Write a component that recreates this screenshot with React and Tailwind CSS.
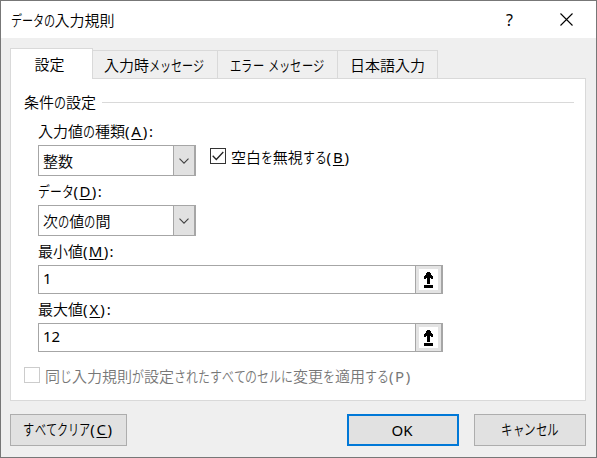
import React from "react";

// Splits a label into runs so that kana can be set narrower than kanji.
function Label({ text, size = 15, k = 0.75, gap = 1 }) {
  const runs = text.match(/[\u3040-\u30ff]|[\u4e00-\u9fff]+|[^\u3040-\u30ff\u4e00-\u9fff]+/g);
  return (
    <span className="inline-flex whitespace-pre">
      {runs.map((run, i) => {
        if (/[\u3040-\u30ff]/.test(run)) {
          return (
            <span key={i} className="inline-block font-[350]" style={{ width: size * k }}>
              <span className="inline-block origin-left" style={{ transform: `scaleX(${k})`, width: size }}>{run}</span>
            </span>
          );
        }
        const key = run.match(/^(\()([A-Z])(\).*)$/);
        if (key) {
          return (
            <span key={i} style={{ letterSpacing: gap }}>
              {key[1]}
              <span className={key[2] === "P" ? "" : "underline decoration-1 underline-offset-2"}>{key[2]}</span>
              {key[3]}
            </span>
          );
        }
        return <span key={i} className="font-[350]">{run}</span>;
      })}
    </span>
  );
}

function Select({ text, k }) {
  return (
    <div className="flex h-[31px] w-[158px] border border-[#a6a6a6] bg-white">
      <div className="flex-1 pl-[4px] leading-[30px]"><Label text={text} k={k} /></div>
      <div className="flex w-[22px] items-center justify-center border-l border-r border-[#a6a6a6] bg-[#e1e1e1]">
        <svg width="10" height="6" viewBox="0 0 10 6" fill="none" stroke="#404040" strokeWidth="1.1"><path d="M.5.7 5 5.2 9.5.7" /></svg>
      </div>
    </div>
  );
}

function RangeInput({ value }) {
  return (
    <div className="flex h-[29px] w-[405px] border border-[#a6a6a6] bg-white">
      <div className="flex-1 pl-[4px] leading-[25px]">{value}</div>
      <div className="w-[27px] border-l border-r border-[#a6a6a6] bg-[#e3e3e3] p-[3px]">
        <div className="flex h-[21px] w-[19px] items-center justify-center bg-white">
          <svg width="9" height="16" viewBox="0 0 9 16" fill="#000" shapeRendering="crispEdges">
            <path d="M3 0h3v1h1v2h1v1h1v3H7V6H6v6H3V6H2v1H0V4h1V3h1V1h1zM0 13h9v3H0z" />
          </svg>
        </div>
      </div>
    </div>
  );
}

export default function App() {
  return (
    <div className="flex h-[458px] w-[597px] flex-col border border-[#777] bg-[#efefef] font-['Noto_Sans','Noto_Sans_CJK_JP',sans-serif] text-[15px] leading-5 text-black">
      <header className="flex h-[37px] shrink-0 items-center bg-white pl-[10px]">
        <div className="flex-1"><Label text="データの入力規則" size={14.7} k={0.74} /></div>
        <span className="w-[54px] text-[16px]">?</span>
        <svg className="mr-[23px]" width="13" height="13" viewBox="0 0 13 13" stroke="#000" strokeWidth="1.1"><path d="m.5.5 12 12m0-12-12 12" /></svg>
      </header>

      <nav className="relative z-10 ml-[9px] mt-[10px] flex h-[31px] shrink-0 items-end leading-[28px]">
        <div className="flex h-[31px] w-[83px] justify-center border border-b-0 border-[#d9d9d9] bg-white pt-[1px] pr-[4px]"><Label text="設定" /></div>
        <div className="h-[29px] w-[125px] border-y border-r border-[#d9d9d9] pl-[11px]"><Label text="入力時メッセージ" k={0.74} /></div>
        <div className="h-[29px] w-[120px] border-y border-r border-[#d9d9d9] pl-[12px]"><Label text="エラー メッセージ" k={0.755} /></div>
        <div className="h-[29px] w-[100px] border-y border-r border-[#d9d9d9] pl-[12px]"><Label text="日本語入力" /></div>
      </nav>

      <main className="ml-[9px] -mt-px h-[323px] w-[576px] shrink-0 border border-[#d9d9d9] bg-white">
        <div className="ml-[13px] mt-[13px] flex h-5 items-center">
          <Label text="条件の設定" k={0.8} />
          <div className="ml-[6px] h-px w-[472px] bg-[#d9d9d9]" />
        </div>
        <div className="ml-[27px]">
          <div className="mt-[9px] h-5"><Label text="入力値の種類(A):" k={0.8} gap={1.8} /></div>
          <div className="mt-[4px] flex">
            <Select text="整数" />
            <div className="ml-[14px] mt-[3px] flex">
              <div className="flex h-4 w-4 items-center justify-center border border-[#333] bg-white">
                <svg width="12" height="10" viewBox="0 0 12 10" fill="none" stroke="#222" strokeWidth="1.3"><path d="m.7 4.7 3.6 3.8L11.3 1" /></svg>
              </div>
              <div className="ml-[5px] -mt-px"><Label text="空白を無視する(B)" k={0.79} gap={1.8} /></div>
            </div>
          </div>
          <div className="mt-[5px] h-5"><Label text="データ(D):" k={0.79} gap={1.4} /></div>
          <div className="mt-[4px]"><Select text="次の値の間" k={0.75} /></div>
          <div className="mt-[5px] h-5"><Label text="最小値(M):" gap={1.3} /></div>
          <div className="mt-[4px]"><RangeInput value="1" /></div>
          <div className="mt-[5px] h-5"><Label text="最大値(X):" gap={2} /></div>
          <div className="mt-[4px]"><RangeInput value="12" /></div>
        </div>
        <div className="ml-[13px] mt-[15px] flex text-[#777]">
          <div className="h-4 w-4 border border-[#ccc]" />
          <div className="ml-[5px] -mt-px"><Label text="同じ入力規則が設定されたすべてのセルに変更を適用する(P)" k={0.795} gap={1.6} /></div>
        </div>
      </main>

      <footer className="ml-[9px] mt-[13px] flex h-8 w-[576px] leading-[29px]">
        <button className="flex w-[117px] justify-center border border-[#adadad] bg-[#e1e1e1]"><Label text="すべてクリア(C)" k={0.745} gap={1.6} /></button>
        <button className="ml-[220px] w-[112px] border-2 border-[#0078d7] bg-[#e1e1e1] pr-[2px] leading-[27px]">OK</button>
        <button className="ml-[15px] flex w-[112px] justify-center border border-[#adadad] bg-[#e1e1e1]"><Label text="キャンセル" k={0.77} /></button>
      </footer>
    </div>
  );
}
